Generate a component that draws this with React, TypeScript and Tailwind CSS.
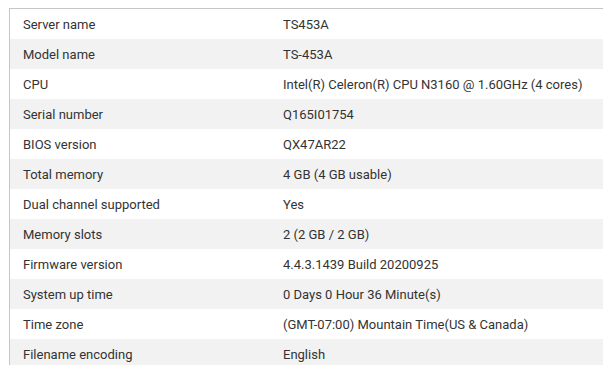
const rows: [string, string][] = [
  ["Server name", "TS453A"],
  ["Model name", "TS-453A"],
  ["CPU", "Intel(R) Celeron(R) CPU N3160 @ 1.60GHz (4 cores)"],
  ["Serial number", "Q165I01754"],
  ["BIOS version", "QX47AR22"],
  ["Total memory", "4 GB (4 GB usable)"],
  ["Dual channel supported", "Yes"],
  ["Memory slots", "2 (2 GB / 2 GB)"],
  ["Firmware version", "4.4.3.1439 Build 20200925"],
  ["System up time", "0 Days 0 Hour 36 Minute(s)"],
  ["Time zone", "(GMT-07:00) Mountain Time(US & Canada)"],
  ["Filename encoding", "English"],
];

export default function App() {
  return (
    <div className="h-[365px] w-[603px] overflow-hidden bg-white pl-[9px] pt-[8px]">
      <div
        className="w-[640px] border-l border-t border-[#c6c6c6] text-[13px] text-[#333333]"
        style={{ fontFamily: "Roboto, 'Liberation Sans', sans-serif" }}
      >
        {rows.map(([label, value], i) => (
          <div
            key={label}
            className={`flex h-[30px] items-center pt-[2px] ${i % 2 === 1 ? "bg-[#f2f2f2]" : "bg-white"}`}
          >
            <div className="w-[273px] pl-[13px]">{label}</div>
            <div className="flex-1">{value}</div>
          </div>
        ))}
      </div>
    </div>
  );
}
